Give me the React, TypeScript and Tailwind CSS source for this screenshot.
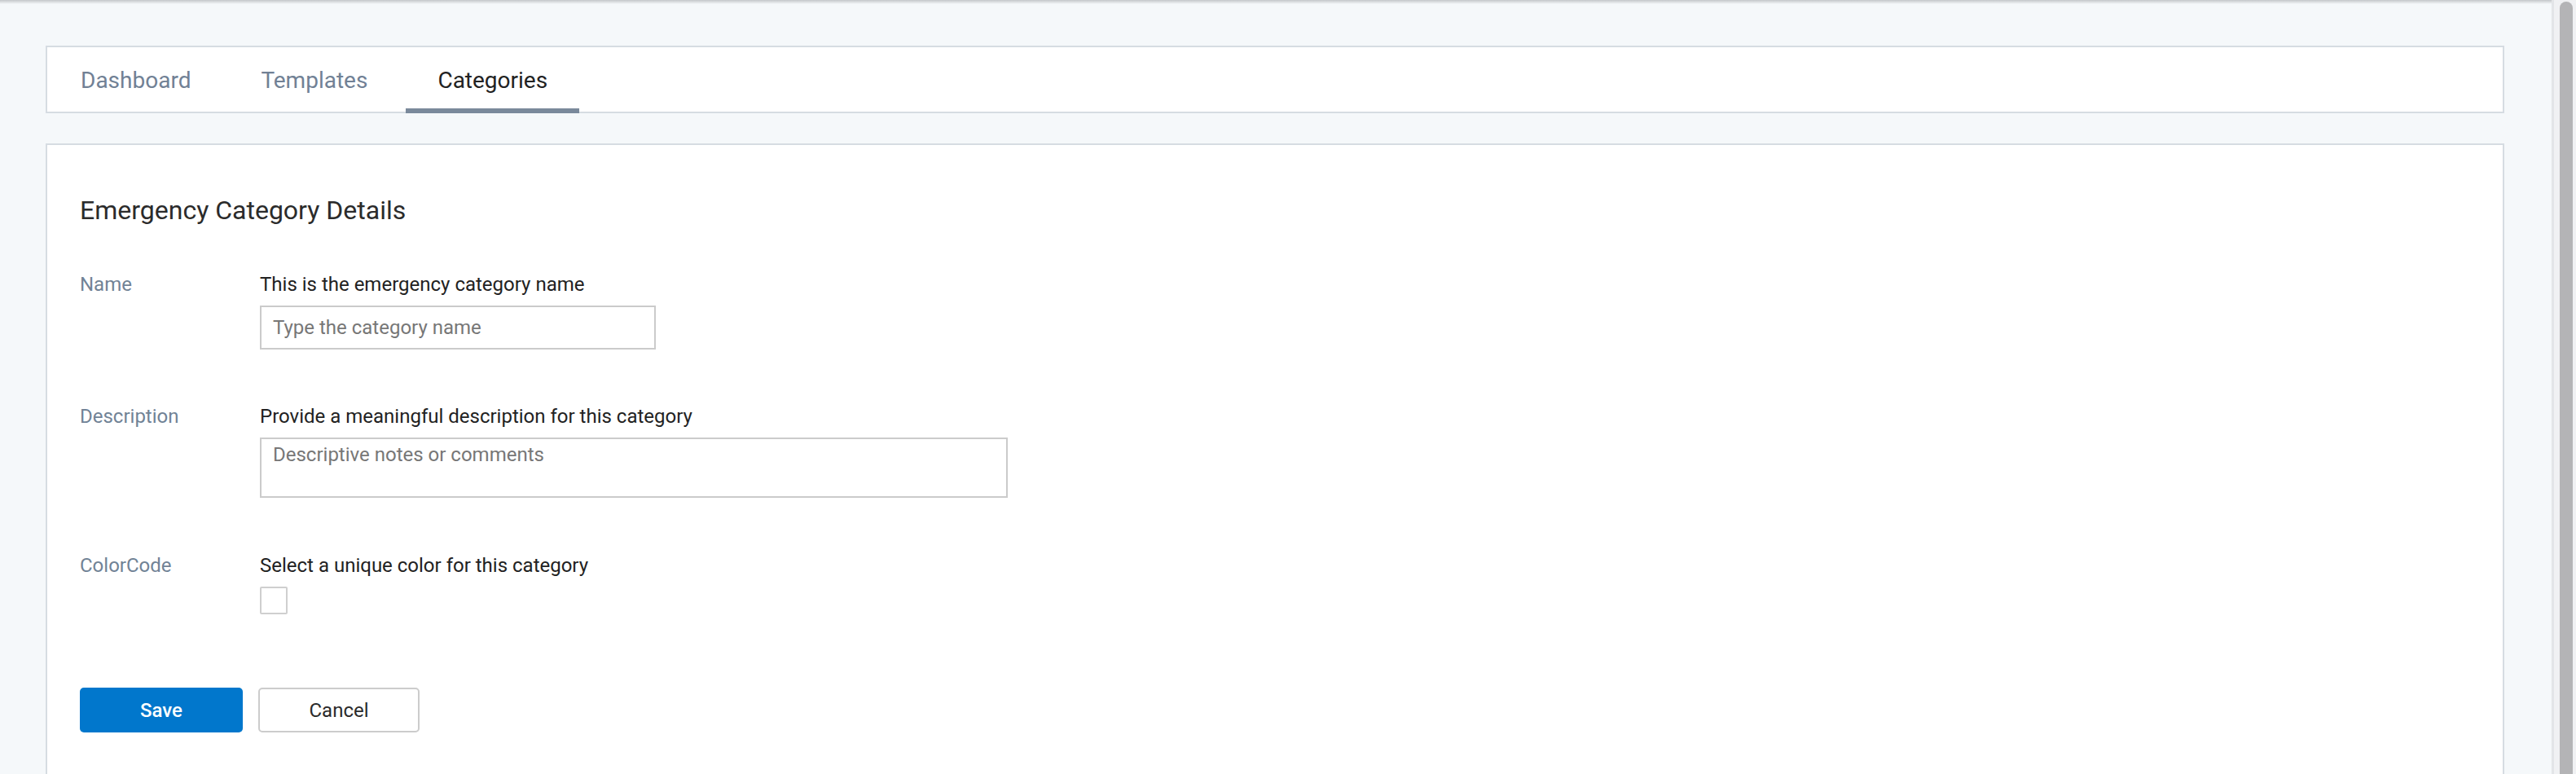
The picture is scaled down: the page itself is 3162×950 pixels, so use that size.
import { useState } from 'react'

const tabs = ['Dashboard', 'Templates', 'Categories']

export default function App() {
  const [active, setActive] = useState('Categories')

  return (
    <div className="flex h-[950px] w-full overflow-hidden bg-[#f5f8fa] font-['Roboto',sans-serif]">
      <div className="flex min-w-0 flex-1 flex-col">
        {/* top shadow */}
        <div className="h-[5px] shrink-0 bg-gradient-to-b from-[#c4c7ca] to-[#f5f8fa]" />

        <div className="flex flex-1 flex-col pl-[56px] pr-[58px] pt-[51px]">
          {/* Tabs */}
          <div className="h-[83px] shrink-0 border-2 border-[#d6dce2] bg-white">
            <ul className="-mb-[2px] flex h-[81px] gap-[8px] pl-[2px]">
              {tabs.map(t => (
                <li key={t}>
                  <button
                    onClick={() => setActive(t)}
                    className={
                      t === active
                        ? 'h-full border-b-[6px] border-[#7a899b] px-[39px] pt-[6px] text-[28px] text-[#222]'
                        : 'h-full border-b-[6px] border-transparent px-[39px] pt-[6px] text-[28px] text-[#718195]'
                    }
                  >
                    {t}
                  </button>
                </li>
              ))}
            </ul>
          </div>

          {/* Details card */}
          <div className="mt-[37px] flex-1 border-2 border-b-0 border-[#d6dce2] bg-white pl-[40px] pt-[61px]">
            <h2 className="text-[32px] leading-[38px] text-[#2b2b2b]">Emergency Category Details</h2>

            <div className="mt-[56px] flex">
              <div className="w-[221px] text-[24px] leading-[32px] text-[#718396]">Name</div>
              <div>
                <p className="text-[24px] leading-[32px] text-[#222]">This is the emergency category name</p>
                <input
                  placeholder="Type the category name"
                  className="mt-[10px] h-[54px] w-[486px] border-2 border-[#cbcbcb] px-[14px] text-[24px] text-[#333] outline-none placeholder:text-[#777]"
                />
              </div>
            </div>

            <div className="mt-[66px] flex">
              <div className="w-[221px] text-[24px] leading-[32px] text-[#718396]">Description</div>
              <div>
                <p className="text-[24px] leading-[32px] text-[#222]">Provide a meaningful description for this category</p>
                <textarea
                  placeholder="Descriptive notes or comments"
                  className="mt-[10px] block h-[74px] w-[918px] resize-none border-2 border-[#cbcbcb] px-[14px] pt-[5px] text-[24px] leading-[28px] text-[#333] outline-none placeholder:text-[#777]"
                />
              </div>
            </div>

            <div className="mt-[67px] flex">
              <div className="w-[221px] text-[24px] leading-[32px] text-[#718396]">ColorCode</div>
              <div>
                <p className="text-[24px] leading-[32px] text-[#222]">Select a unique color for this category</p>
                <div className="mt-[10px] h-[34px] w-[34px] rounded-[2px] border-2 border-[#cfcfcf] bg-white" />
              </div>
            </div>

            <div className="mt-[90px] flex gap-[19px]">
              <button className="h-[55px] w-[200px] rounded-[5px] bg-[#0177cc] text-[24px] font-medium text-white">
                Save
              </button>
              <button className="h-[55px] w-[198px] rounded-[5px] border-2 border-[#cccccc] bg-white text-[24px] text-[#2b2b2b]">
                Cancel
              </button>
            </div>
          </div>
        </div>
      </div>

      {/* scrollbar */}
      <div className="flex w-[30px] shrink-0 border-l-[3px] border-[#e3e5e8] bg-[#f0f1f3] pl-[7px] pt-[2px]">
        <div className="h-full w-[16px] rounded-t-full bg-[#b4b4b6]" />
      </div>
    </div>
  )
}
